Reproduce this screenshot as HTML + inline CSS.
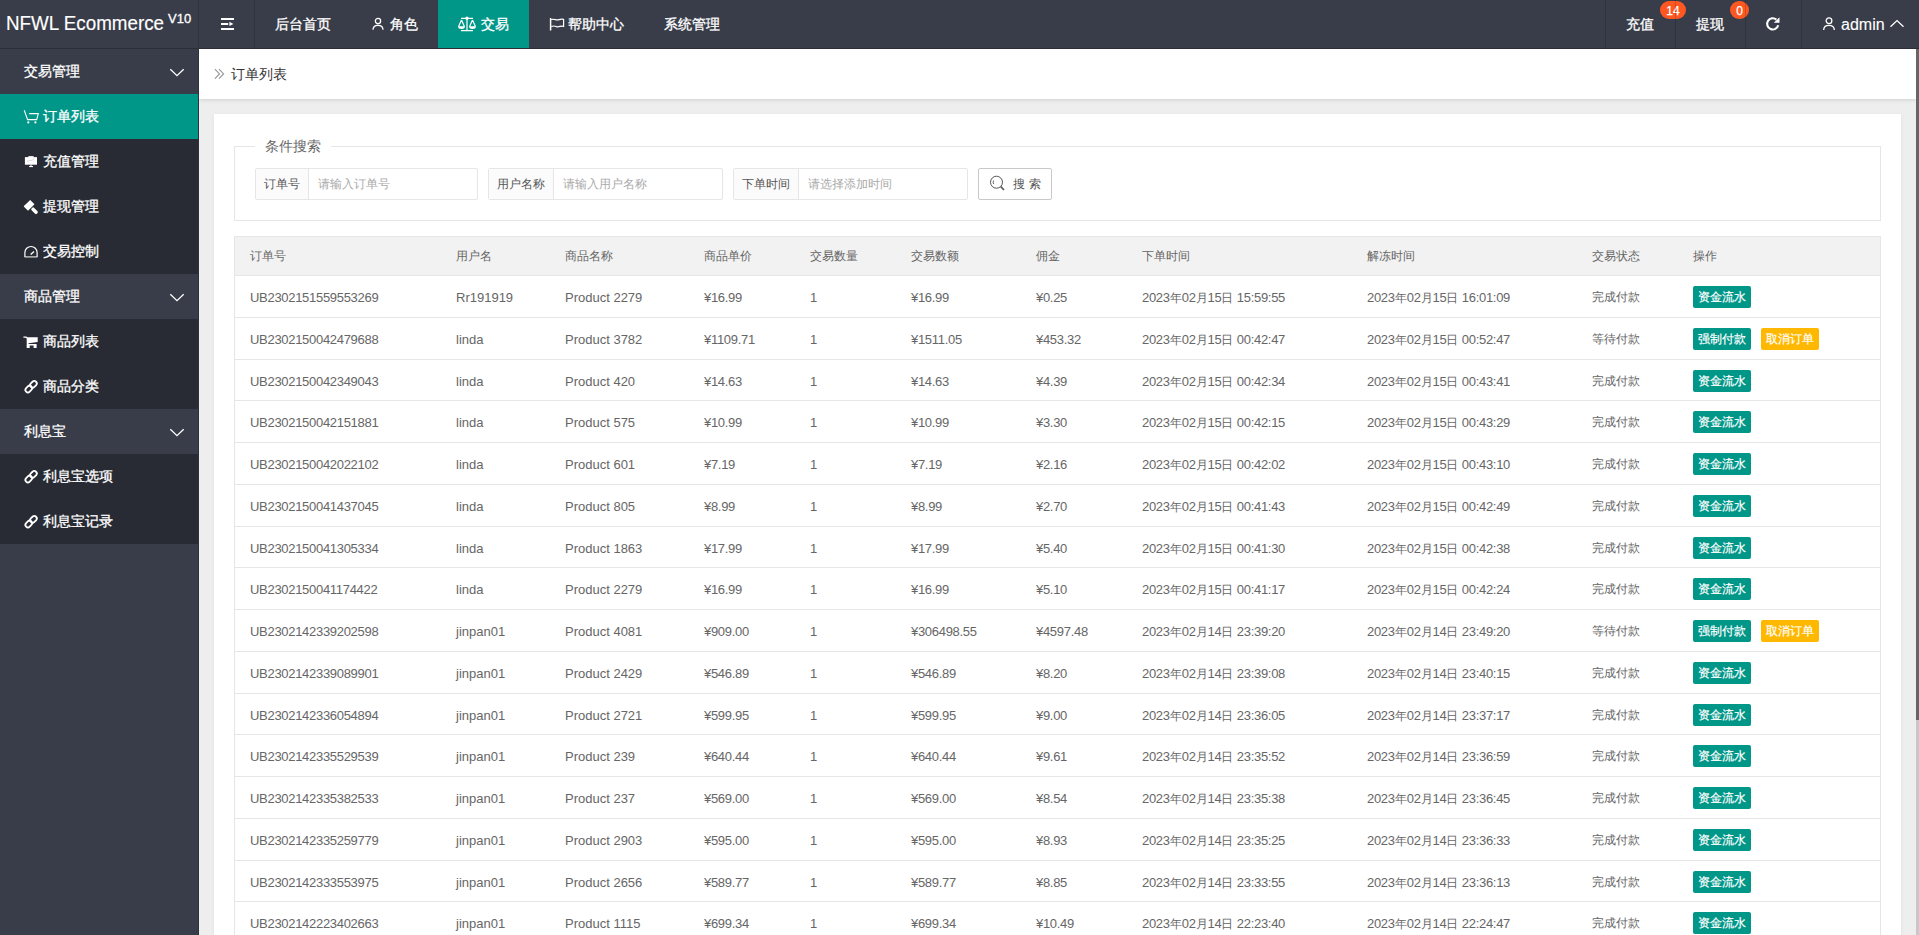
<!DOCTYPE html>
<html><head><meta charset="utf-8">
<style>
*{margin:0;padding:0;box-sizing:border-box}
html,body{width:1919px;height:935px;overflow:hidden;background:#eeeeee;font-family:"Liberation Sans",sans-serif;font-size:14px;color:#666}
b{font-weight:normal}
.abs{position:absolute}
#hdr{position:absolute;z-index:3;left:0;top:0;width:1919px;height:49px;background:#393D49;border-bottom:1px solid #2b2e37}
.nt{position:absolute;top:0;height:48px;line-height:48px;color:#fff;font-size:14px;white-space:nowrap;-webkit-text-stroke:0.3px #fff}
.vdiv{position:absolute;top:0;width:1px;height:48px;background:rgba(0,0,0,0.16)}
#side{position:absolute;z-index:3;left:0;top:49px;width:199px;height:886px;background:#393D49;border-right:1px solid #2f323b}
.sg{position:absolute;left:0;width:198px;height:45px;background:#393D49;color:#fff;line-height:45px}
.si{position:absolute;left:0;width:198px;height:45px;background:#282B33;color:#fff;line-height:45px}
.si.on{background:#009688}
.sg span,.si span{position:absolute;left:24px;top:0;-webkit-text-stroke:0.3px #fff}
.si span{left:43px}
#bc{position:absolute;left:199px;top:49px;width:1717px;height:50px;background:#fff;box-shadow:0 1px 4px rgba(0,0,0,.13)}
#card{position:absolute;left:214px;top:114px;width:1687px;height:900px;background:#fff;box-shadow:0 1px 4px rgba(0,0,0,.06)}
#sb{position:absolute;left:1916px;top:49px;width:3px;height:886px;background:#c8c8c8}
#sbt{position:absolute;left:1916px;top:49px;width:3px;height:671px;background:#666}
.fs{position:absolute;left:20px;top:32px;width:1647px;height:75px;border:1px solid #e6e6e6}
.lg{position:absolute;left:20px;top:-11px;padding:0 10px;background:#fff;font-size:14px;color:#666;line-height:20px}
.ig{position:absolute;top:21px;height:32px;border:1px solid #e6e6e6;border-radius:2px;background:#fff}
.ig .lb{position:absolute;left:0;top:0;height:30px;line-height:30px;background:#FBFBFB;border-right:1px solid #e6e6e6;color:#555;font-size:12px;text-align:center}
.ig .ph{position:absolute;top:0;line-height:30px;color:#aaa;font-size:12px}
.btn{position:absolute;height:32px;border:1px solid #C9C9C9;border-radius:2px;background:#fff;color:#555;font-size:12px;line-height:30px}
#tbl{position:absolute;left:20px;top:122px;width:1647px;height:800px;border:1px solid #e6e6e6;border-bottom:none}
.th{position:absolute;left:0;top:0;width:1645px;height:39px;background:#f2f2f2;border-bottom:1px solid #e6e6e6}
.row{position:absolute;left:0;width:1645px;border-bottom:1px solid #e6e6e6;height:41.75px}
.c{position:absolute;top:0;white-space:nowrap;font-size:13px;letter-spacing:-0.3px;color:#666}
.c b{font-size:12px;letter-spacing:0}
.z{position:absolute;top:0;white-space:nowrap;font-size:12px;color:#666}
.th .z{line-height:38px}
.row .c,.row .z{line-height:43px}
.tg{position:absolute;top:10px;height:22px;line-height:22px;padding:0 5px;color:#fff;font-size:12px;border-radius:2px;-webkit-text-stroke:0.2px #fff}
.tg.g{background:#009688}
.tg.o{background:#FFB800}
.badge{position:absolute;top:1px;height:18px;line-height:20px;-webkit-text-stroke:0.25px #fff;border-radius:9px;background:#FF5722;color:#fff;font-size:12px;text-align:center}
</style></head>
<body>
<div id="hdr">
  <div class="abs" style="left:6px;top:11px;font-size:20px;line-height:24px;color:#fff;white-space:nowrap;transform:scaleX(0.94);transform-origin:0 0;-webkit-text-stroke:0.15px #fff">NFWL Ecommerce</div>
  <div class="abs" style="left:168px;top:11px;font-size:13px;line-height:16px;color:#fff;-webkit-text-stroke:0.3px #fff">V10</div>
  <div class="vdiv" style="left:198px"></div>
  <div class="vdiv" style="left:254px"></div>
  <div class="nt" style="left:275px">后台首页</div>
  <div class="nt" style="left:390px">角色</div>
  <div class="abs" style="left:438px;top:0;width:91px;height:48px;background:#009688"></div>
  <div class="nt" style="left:481px">交易</div>
  <div class="nt" style="left:568px">帮助中心</div>
  <div class="nt" style="left:664px">系统管理</div>
  <div class="nt" style="left:1626px">充值</div>
  <div class="nt" style="left:1696px">提现</div>
  <div class="badge" style="left:1660px;width:26px">14</div>
  <div class="badge" style="left:1730px;width:19px">0</div>
  <div class="vdiv" style="left:1605px"></div>
  <div class="vdiv" style="left:1675px"></div>
  <div class="vdiv" style="left:1745px"></div>
  <div class="vdiv" style="left:1801px"></div>
  <div class="nt" style="left:1841px;top:1px;font-size:16px;-webkit-text-stroke:0.1px #fff">admin</div>
  
<svg class="abs" style="left:220px;top:17px" width="15" height="14" viewBox="0 0 15 14"><rect x="1" y="1" width="13" height="2" fill="#fff"/><rect x="1" y="6" width="7.2" height="2" fill="#fff"/><rect x="1" y="11" width="13" height="2" fill="#fff"/><path d="M9.4 4.7 L13.4 6.9 L9.4 9.1Z" fill="#fff"/></svg>
<svg class="abs" style="left:370px;top:16px" width="16" height="16" viewBox="0 0 16 16" fill="none" stroke="#fff" stroke-width="1.3"><circle cx="8" cy="5.1" r="2.65"/><path d="M3 13.8 C3 10.9 5 9.3 8 9.3 C11 9.3 13 10.9 13 13.8"/></svg>
<svg class="abs" style="left:456px;top:16px" width="22" height="16" viewBox="0 0 22 16" fill="none" stroke="#fff" stroke-width="1.2"><path d="M5 2.4 H17 M11 2 V14.5 M5 14.6 H17"/><circle cx="11" cy="2.2" r="1" fill="#fff"/><path d="M5.5 4 L2.6 10.5 M5.5 4 L8.4 10.5 M16.5 4 L13.6 10.5 M16.5 4 L19.4 10.5"/><path d="M2 10.3 H9 C9 12.5 7.5 13 5.5 13 C3.5 13 2 12.5 2 10.3Z M13 10.3 H20 C20 12.5 18.5 13 16.5 13 C14.5 13 13 12.5 13 10.3Z" fill="#fff" stroke="none"/></svg>
<svg class="abs" style="left:546px;top:16px" width="20" height="16" viewBox="0 0 20 16" fill="none" stroke="#fff" stroke-width="1.2"><path d="M4.6 2 V14.5" stroke-width="1.5"/><path d="M5.3 3.6 C8 2.3 10.5 4.8 13 3.6 C15 2.8 17 3.2 17.6 3.4 V10.4 C15 9.2 13 11.5 10.5 10.6 C8.5 9.8 7 9.7 5.3 10.6"/></svg>
<svg class="abs" style="left:1764px;top:15px" width="18" height="18" viewBox="0 0 18 18"><path d="M14.2 10.2 A5.6 5.6 0 1 1 12.4 4.6" fill="none" stroke="#fff" stroke-width="2.1"/><path d="M15.5 2.2 V7.8 H9.8Z" fill="#fff"/></svg>
<svg class="abs" style="left:1821px;top:16px" width="16" height="16" viewBox="0 0 16 16" fill="none" stroke="#fff" stroke-width="1.3"><circle cx="8" cy="4.7" r="2.85"/><path d="M2.7 13.9 C2.7 11 4.8 9.4 8 9.4 C11.2 9.4 13.3 11 13.3 13.9"/></svg>
<svg class="abs" style="left:1888px;top:18px" width="18" height="12" viewBox="0 0 18 12" fill="none" stroke="#fff" stroke-width="1.3"><path d="M2.5 8.8 L9 2.6 L15.5 8.8"/></svg>

</div>
<div id="side">
  <div class="sg" style="top:0"><span>交易管理</span><svg class="abs" style="left:168px;top:18px" width="18" height="12" viewBox="0 0 18 12" fill="none" stroke="#fff" stroke-width="1.3"><path d="M2.3 2.2 L9 8.6 L15.7 2.2"/></svg></div>
  <div class="si on" style="top:45px"><span>订单列表</span></div>
  <div class="si" style="top:90px"><span>充值管理</span></div>
  <div class="si" style="top:135px"><span>提现管理</span></div>
  <div class="si" style="top:180px"><span>交易控制</span></div>
  <div class="sg" style="top:225px"><span>商品管理</span><svg class="abs" style="left:168px;top:18px" width="18" height="12" viewBox="0 0 18 12" fill="none" stroke="#fff" stroke-width="1.3"><path d="M2.3 2.2 L9 8.6 L15.7 2.2"/></svg></div>
  <div class="si" style="top:270px"><span>商品列表</span></div>
  <div class="si" style="top:315px"><span>商品分类</span></div>
  <div class="sg" style="top:360px"><span>利息宝</span><svg class="abs" style="left:168px;top:18px" width="18" height="12" viewBox="0 0 18 12" fill="none" stroke="#fff" stroke-width="1.3"><path d="M2.3 2.2 L9 8.6 L15.7 2.2"/></svg></div>
  <div class="si" style="top:405px"><span>利息宝选项</span></div>
  <div class="si" style="top:450px"><span>利息宝记录</span></div>
  
<svg class="abs" style="left:22px;top:58px" width="20" height="18" viewBox="0 0 20 18" fill="none" stroke="#fff" stroke-width="1.1"><path d="M2.2 3.2 L5.6 12.6 H14.7 L16.3 6.6 H7.2"/><circle cx="6.3" cy="15.4" r="1.1" fill="#fff" stroke="none"/><circle cx="13.4" cy="15.4" r="1.1" fill="#fff" stroke="none"/></svg>
<svg class="abs" style="left:22px;top:103px" width="18" height="18" viewBox="0 0 18 18"><rect x="2.9" y="5.1" width="12.1" height="7.6" fill="#fff"/><rect x="6.4" y="4.1" width="5.2" height="1.4" fill="#fff"/><rect x="8.5" y="12.5" width="1" height="1.6" fill="#fff"/><rect x="7.1" y="14" width="3.9" height="1.1" fill="#fff"/><path d="M5 9.5 L7.5 8.5 L10 8.3 L12.5 6.5" stroke="#c9c9c9" stroke-width="0.7" fill="none"/></svg>
<svg class="abs" style="left:23px;top:150px" width="18" height="18" viewBox="0 0 18 18"><g transform="rotate(-45 9.5 9)"><rect x="4.4" y="1.6" width="9.2" height="6.2" rx="0.4" fill="#fff"/><rect x="7.3" y="8.7" width="3.4" height="7.4" rx="1.2" fill="#fff"/></g></svg>
<svg class="abs" style="left:22px;top:193px" width="18" height="18" viewBox="0 0 18 18" fill="none" stroke="#fff" stroke-width="1.2"><path d="M2.9 15 V10.6 A6.1 6.1 0 0 1 15.1 10.6 V15"/><path d="M2.6 14.9 H15.4" stroke="#ddd" stroke-width="1.2"/><path d="M8.7 12.4 L12 9.4" stroke-width="1.4"/></svg>
<svg class="abs" style="left:22px;top:283px" width="18" height="18" viewBox="0 0 18 18"><path d="M1.4 4.5 H4.4 L5.3 5.2 H15.7 V10 L6.5 11.3 V12 H14.6 V13.6 H4.7 V6.5 L3.8 5.8 H1.4Z" fill="#fff"/><rect x="4.7" y="13" width="3" height="3" fill="#fff"/><rect x="11.6" y="13" width="3" height="3" fill="#fff"/></svg>
<svg class="abs" style="left:22px;top:329px" width="18" height="18" viewBox="0 0 18 18" fill="none" stroke="#fff" stroke-width="1.8"><g transform="rotate(-45 9.1 8.7)"><rect x="2.1" y="6.2" width="7.4" height="5" rx="2.5"/><rect x="8.7" y="6.2" width="7.4" height="5" rx="2.5"/></g></svg><svg class="abs" style="left:22px;top:419px" width="18" height="18" viewBox="0 0 18 18" fill="none" stroke="#fff" stroke-width="1.8"><g transform="rotate(-45 9.1 8.7)"><rect x="2.1" y="6.2" width="7.4" height="5" rx="2.5"/><rect x="8.7" y="6.2" width="7.4" height="5" rx="2.5"/></g></svg><svg class="abs" style="left:22px;top:464px" width="18" height="18" viewBox="0 0 18 18" fill="none" stroke="#fff" stroke-width="1.8"><g transform="rotate(-45 9.1 8.7)"><rect x="2.1" y="6.2" width="7.4" height="5" rx="2.5"/><rect x="8.7" y="6.2" width="7.4" height="5" rx="2.5"/></g></svg>
</div>
<div id="bc">
  <svg class="abs" style="left:14px;top:19px" width="12" height="12" viewBox="0 0 12 12" fill="none" stroke="#999" stroke-width="1.2"><path d="M1.9 1.2 L6.5 5.9 L1.9 10.6 M6 1.2 L10.6 5.9 L6 10.6"/></svg>
  <div class="abs" style="left:32px;top:0;line-height:50px;color:#333;font-size:14px">订单列表</div>
</div>
<div id="card">
  <div class="fs">
    <div class="lg">条件搜索</div>
    <div class="ig" style="left:20px;width:223px"><div class="lb" style="width:53px">订单号</div><div class="ph" style="left:62px">请输入订单号</div></div>
    <div class="ig" style="left:253px;width:235px"><div class="lb" style="width:65px">用户名称</div><div class="ph" style="left:74px">请输入用户名称</div></div>
    <div class="ig" style="left:498px;width:235px"><div class="lb" style="width:65px">下单时间</div><div class="ph" style="left:74px">请选择添加时间</div></div>
    <div class="btn" style="left:743px;width:74px;top:21px">
      <svg class="abs" style="left:8px;top:5px" width="20" height="20" viewBox="0 0 20 20" fill="none" stroke="#555" stroke-width="1"><circle cx="9.5" cy="8.2" r="6"/><path d="M13.8 12.6 L17 16"  stroke-width="1.6"/><path d="M6.6 6.5 A3.5 3.5 0 0 0 6.6 10" stroke-width="0.9"/></svg>
      <span style="position:absolute;left:34px;top:0;letter-spacing:4px">搜索</span>
    </div>
  </div>
  <div id="tbl">
<div class="th"><div class="z" style="left:15px">订单号</div><div class="z" style="left:221px">用户名</div><div class="z" style="left:330px">商品名称</div><div class="z" style="left:469px">商品单价</div><div class="z" style="left:575px">交易数量</div><div class="z" style="left:676px">交易数额</div><div class="z" style="left:801px">佣金</div><div class="z" style="left:907px">下单时间</div><div class="z" style="left:1132px">解冻时间</div><div class="z" style="left:1357px">交易状态</div><div class="z" style="left:1458px">操作</div></div>
<div class="row" style="top:39.0px"><div class="c" style="left:15px">UB2302151559553269</div><div class="c" style="left:221px;letter-spacing:0">Rr191919</div><div class="c" style="left:330px;letter-spacing:0">Product 2279</div><div class="c" style="left:469px">¥16.99</div><div class="c" style="left:575px">1</div><div class="c" style="left:676px">¥16.99</div><div class="c" style="left:801px">¥0.25</div><div class="c" style="left:907px">2023<b>年</b>02<b>月</b>15<b>日</b> 15:59:55</div><div class="c" style="left:1132px">2023<b>年</b>02<b>月</b>15<b>日</b> 16:01:09</div><div class="z" style="left:1357px">完成付款</div><div class="tg g" style="left:1458px">资金流水</div></div>
<div class="row" style="top:80.75px"><div class="c" style="left:15px">UB2302150042479688</div><div class="c" style="left:221px;letter-spacing:0">linda</div><div class="c" style="left:330px;letter-spacing:0">Product 3782</div><div class="c" style="left:469px">¥1109.71</div><div class="c" style="left:575px">1</div><div class="c" style="left:676px">¥1511.05</div><div class="c" style="left:801px">¥453.32</div><div class="c" style="left:907px">2023<b>年</b>02<b>月</b>15<b>日</b> 00:42:47</div><div class="c" style="left:1132px">2023<b>年</b>02<b>月</b>15<b>日</b> 00:52:47</div><div class="z" style="left:1357px">等待付款</div><div class="tg g" style="left:1458px">强制付款</div><div class="tg o" style="left:1526px">取消订单</div></div>
<div class="row" style="top:122.5px"><div class="c" style="left:15px">UB2302150042349043</div><div class="c" style="left:221px;letter-spacing:0">linda</div><div class="c" style="left:330px;letter-spacing:0">Product 420</div><div class="c" style="left:469px">¥14.63</div><div class="c" style="left:575px">1</div><div class="c" style="left:676px">¥14.63</div><div class="c" style="left:801px">¥4.39</div><div class="c" style="left:907px">2023<b>年</b>02<b>月</b>15<b>日</b> 00:42:34</div><div class="c" style="left:1132px">2023<b>年</b>02<b>月</b>15<b>日</b> 00:43:41</div><div class="z" style="left:1357px">完成付款</div><div class="tg g" style="left:1458px">资金流水</div></div>
<div class="row" style="top:164.25px"><div class="c" style="left:15px">UB2302150042151881</div><div class="c" style="left:221px;letter-spacing:0">linda</div><div class="c" style="left:330px;letter-spacing:0">Product 575</div><div class="c" style="left:469px">¥10.99</div><div class="c" style="left:575px">1</div><div class="c" style="left:676px">¥10.99</div><div class="c" style="left:801px">¥3.30</div><div class="c" style="left:907px">2023<b>年</b>02<b>月</b>15<b>日</b> 00:42:15</div><div class="c" style="left:1132px">2023<b>年</b>02<b>月</b>15<b>日</b> 00:43:29</div><div class="z" style="left:1357px">完成付款</div><div class="tg g" style="left:1458px">资金流水</div></div>
<div class="row" style="top:206.0px"><div class="c" style="left:15px">UB2302150042022102</div><div class="c" style="left:221px;letter-spacing:0">linda</div><div class="c" style="left:330px;letter-spacing:0">Product 601</div><div class="c" style="left:469px">¥7.19</div><div class="c" style="left:575px">1</div><div class="c" style="left:676px">¥7.19</div><div class="c" style="left:801px">¥2.16</div><div class="c" style="left:907px">2023<b>年</b>02<b>月</b>15<b>日</b> 00:42:02</div><div class="c" style="left:1132px">2023<b>年</b>02<b>月</b>15<b>日</b> 00:43:10</div><div class="z" style="left:1357px">完成付款</div><div class="tg g" style="left:1458px">资金流水</div></div>
<div class="row" style="top:247.75px"><div class="c" style="left:15px">UB2302150041437045</div><div class="c" style="left:221px;letter-spacing:0">linda</div><div class="c" style="left:330px;letter-spacing:0">Product 805</div><div class="c" style="left:469px">¥8.99</div><div class="c" style="left:575px">1</div><div class="c" style="left:676px">¥8.99</div><div class="c" style="left:801px">¥2.70</div><div class="c" style="left:907px">2023<b>年</b>02<b>月</b>15<b>日</b> 00:41:43</div><div class="c" style="left:1132px">2023<b>年</b>02<b>月</b>15<b>日</b> 00:42:49</div><div class="z" style="left:1357px">完成付款</div><div class="tg g" style="left:1458px">资金流水</div></div>
<div class="row" style="top:289.5px"><div class="c" style="left:15px">UB2302150041305334</div><div class="c" style="left:221px;letter-spacing:0">linda</div><div class="c" style="left:330px;letter-spacing:0">Product 1863</div><div class="c" style="left:469px">¥17.99</div><div class="c" style="left:575px">1</div><div class="c" style="left:676px">¥17.99</div><div class="c" style="left:801px">¥5.40</div><div class="c" style="left:907px">2023<b>年</b>02<b>月</b>15<b>日</b> 00:41:30</div><div class="c" style="left:1132px">2023<b>年</b>02<b>月</b>15<b>日</b> 00:42:38</div><div class="z" style="left:1357px">完成付款</div><div class="tg g" style="left:1458px">资金流水</div></div>
<div class="row" style="top:331.25px"><div class="c" style="left:15px">UB2302150041174422</div><div class="c" style="left:221px;letter-spacing:0">linda</div><div class="c" style="left:330px;letter-spacing:0">Product 2279</div><div class="c" style="left:469px">¥16.99</div><div class="c" style="left:575px">1</div><div class="c" style="left:676px">¥16.99</div><div class="c" style="left:801px">¥5.10</div><div class="c" style="left:907px">2023<b>年</b>02<b>月</b>15<b>日</b> 00:41:17</div><div class="c" style="left:1132px">2023<b>年</b>02<b>月</b>15<b>日</b> 00:42:24</div><div class="z" style="left:1357px">完成付款</div><div class="tg g" style="left:1458px">资金流水</div></div>
<div class="row" style="top:373.0px"><div class="c" style="left:15px">UB2302142339202598</div><div class="c" style="left:221px;letter-spacing:0">jinpan01</div><div class="c" style="left:330px;letter-spacing:0">Product 4081</div><div class="c" style="left:469px">¥909.00</div><div class="c" style="left:575px">1</div><div class="c" style="left:676px">¥306498.55</div><div class="c" style="left:801px">¥4597.48</div><div class="c" style="left:907px">2023<b>年</b>02<b>月</b>14<b>日</b> 23:39:20</div><div class="c" style="left:1132px">2023<b>年</b>02<b>月</b>14<b>日</b> 23:49:20</div><div class="z" style="left:1357px">等待付款</div><div class="tg g" style="left:1458px">强制付款</div><div class="tg o" style="left:1526px">取消订单</div></div>
<div class="row" style="top:414.75px"><div class="c" style="left:15px">UB2302142339089901</div><div class="c" style="left:221px;letter-spacing:0">jinpan01</div><div class="c" style="left:330px;letter-spacing:0">Product 2429</div><div class="c" style="left:469px">¥546.89</div><div class="c" style="left:575px">1</div><div class="c" style="left:676px">¥546.89</div><div class="c" style="left:801px">¥8.20</div><div class="c" style="left:907px">2023<b>年</b>02<b>月</b>14<b>日</b> 23:39:08</div><div class="c" style="left:1132px">2023<b>年</b>02<b>月</b>14<b>日</b> 23:40:15</div><div class="z" style="left:1357px">完成付款</div><div class="tg g" style="left:1458px">资金流水</div></div>
<div class="row" style="top:456.5px"><div class="c" style="left:15px">UB2302142336054894</div><div class="c" style="left:221px;letter-spacing:0">jinpan01</div><div class="c" style="left:330px;letter-spacing:0">Product 2721</div><div class="c" style="left:469px">¥599.95</div><div class="c" style="left:575px">1</div><div class="c" style="left:676px">¥599.95</div><div class="c" style="left:801px">¥9.00</div><div class="c" style="left:907px">2023<b>年</b>02<b>月</b>14<b>日</b> 23:36:05</div><div class="c" style="left:1132px">2023<b>年</b>02<b>月</b>14<b>日</b> 23:37:17</div><div class="z" style="left:1357px">完成付款</div><div class="tg g" style="left:1458px">资金流水</div></div>
<div class="row" style="top:498.25px"><div class="c" style="left:15px">UB2302142335529539</div><div class="c" style="left:221px;letter-spacing:0">jinpan01</div><div class="c" style="left:330px;letter-spacing:0">Product 239</div><div class="c" style="left:469px">¥640.44</div><div class="c" style="left:575px">1</div><div class="c" style="left:676px">¥640.44</div><div class="c" style="left:801px">¥9.61</div><div class="c" style="left:907px">2023<b>年</b>02<b>月</b>14<b>日</b> 23:35:52</div><div class="c" style="left:1132px">2023<b>年</b>02<b>月</b>14<b>日</b> 23:36:59</div><div class="z" style="left:1357px">完成付款</div><div class="tg g" style="left:1458px">资金流水</div></div>
<div class="row" style="top:540.0px"><div class="c" style="left:15px">UB2302142335382533</div><div class="c" style="left:221px;letter-spacing:0">jinpan01</div><div class="c" style="left:330px;letter-spacing:0">Product 237</div><div class="c" style="left:469px">¥569.00</div><div class="c" style="left:575px">1</div><div class="c" style="left:676px">¥569.00</div><div class="c" style="left:801px">¥8.54</div><div class="c" style="left:907px">2023<b>年</b>02<b>月</b>14<b>日</b> 23:35:38</div><div class="c" style="left:1132px">2023<b>年</b>02<b>月</b>14<b>日</b> 23:36:45</div><div class="z" style="left:1357px">完成付款</div><div class="tg g" style="left:1458px">资金流水</div></div>
<div class="row" style="top:581.75px"><div class="c" style="left:15px">UB2302142335259779</div><div class="c" style="left:221px;letter-spacing:0">jinpan01</div><div class="c" style="left:330px;letter-spacing:0">Product 2903</div><div class="c" style="left:469px">¥595.00</div><div class="c" style="left:575px">1</div><div class="c" style="left:676px">¥595.00</div><div class="c" style="left:801px">¥8.93</div><div class="c" style="left:907px">2023<b>年</b>02<b>月</b>14<b>日</b> 23:35:25</div><div class="c" style="left:1132px">2023<b>年</b>02<b>月</b>14<b>日</b> 23:36:33</div><div class="z" style="left:1357px">完成付款</div><div class="tg g" style="left:1458px">资金流水</div></div>
<div class="row" style="top:623.5px"><div class="c" style="left:15px">UB2302142333553975</div><div class="c" style="left:221px;letter-spacing:0">jinpan01</div><div class="c" style="left:330px;letter-spacing:0">Product 2656</div><div class="c" style="left:469px">¥589.77</div><div class="c" style="left:575px">1</div><div class="c" style="left:676px">¥589.77</div><div class="c" style="left:801px">¥8.85</div><div class="c" style="left:907px">2023<b>年</b>02<b>月</b>14<b>日</b> 23:33:55</div><div class="c" style="left:1132px">2023<b>年</b>02<b>月</b>14<b>日</b> 23:36:13</div><div class="z" style="left:1357px">完成付款</div><div class="tg g" style="left:1458px">资金流水</div></div>
<div class="row" style="top:665.25px"><div class="c" style="left:15px">UB2302142223402663</div><div class="c" style="left:221px;letter-spacing:0">jinpan01</div><div class="c" style="left:330px;letter-spacing:0">Product 1115</div><div class="c" style="left:469px">¥699.34</div><div class="c" style="left:575px">1</div><div class="c" style="left:676px">¥699.34</div><div class="c" style="left:801px">¥10.49</div><div class="c" style="left:907px">2023<b>年</b>02<b>月</b>14<b>日</b> 22:23:40</div><div class="c" style="left:1132px">2023<b>年</b>02<b>月</b>14<b>日</b> 22:24:47</div><div class="z" style="left:1357px">完成付款</div><div class="tg g" style="left:1458px">资金流水</div></div>
  </div>
</div>
<div id="sb"></div><div id="sbt"></div>
</body></html>
